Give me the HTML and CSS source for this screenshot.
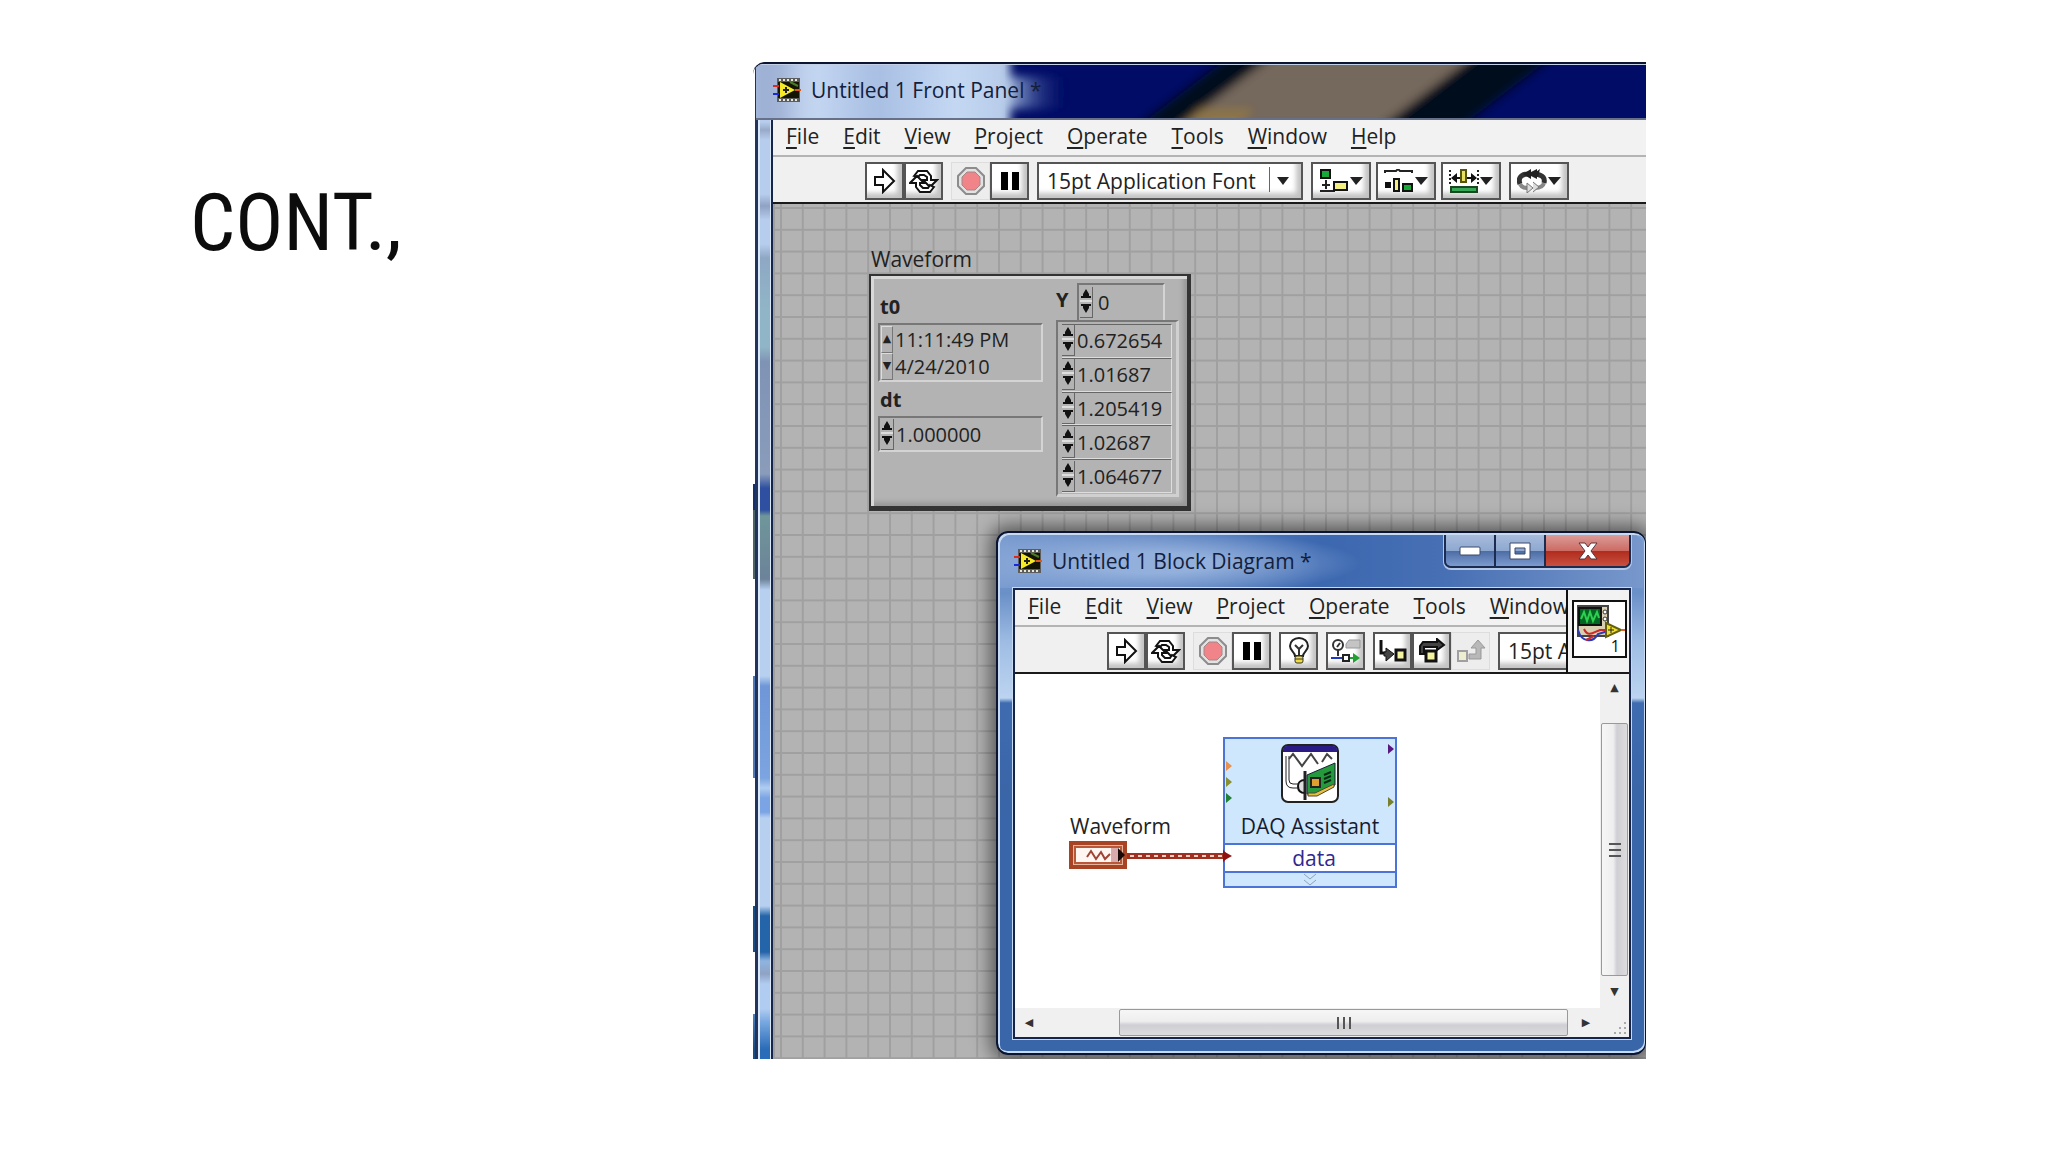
FILE: index.html
```html
<!DOCTYPE html>
<html lang="en">
<head>
<meta charset="utf-8">
<title>Cont.,</title>
<link rel="stylesheet" href="styles.css">
</head>
<body>
<svg class="symbols" aria-hidden="true">
  <symbol id="vi" viewBox="0 0 28 24">
    <rect x="4" y="0" width="23" height="24" fill="#5c5c5c"/>
    <path d="M6 2H26M6 22H26" stroke="#e8e8d8" stroke-width="2" stroke-dasharray="2 2"/>
    <rect x="5" y="4" width="21" height="16" fill="#141405"/>
    <path d="M0 8H6" stroke="#e02818" stroke-width="2"/><path d="M0 16H6" stroke="#1828d8" stroke-width="2"/>
    <path d="M7 4L22 12L7 20Z" fill="#f6ea28"/><path d="M17 4L25 8" stroke="#4c7a28" stroke-width="2"/>
    <path d="M13 9V15M10 12H16" stroke="#222" stroke-width="2"/><path d="M22 12H28" stroke="#e05818" stroke-width="2"/>
  </symbol>
  <symbol id="run" viewBox="0 0 24 26"><path d="M2 9H10V2L21 13L10 24V17H2Z" fill="#fff" stroke="#111" stroke-width="2"/></symbol>
  <symbol id="loop" viewBox="0 0 30 26">
    <path d="M5 8L9 3H18L22 8V12H28L21 19L14 12H18V9L15 7H11L9 9Z" fill="#fff" stroke="#111" stroke-width="2"/>
    <path d="M25 19L21 24H11L7 19V15H1L8 8L15 15H11V17L14 20H19L21 17Z" fill="#fff" stroke="#111" stroke-width="2"/>
  </symbol>
  <symbol id="stop" viewBox="0 0 28 28">
    <path d="M9 1H19L27 9V19L19 27H9L1 19V9Z" fill="#e2e2e2" stroke="#8c8c8c" stroke-width="2"/>
    <path d="M10 5H18L23 10V18L18 23H10L5 18V10Z" fill="#f08488" stroke="#a28888" stroke-width="1"/>
  </symbol>
  <symbol id="pause" viewBox="0 0 20 20"><path d="M1 1H8V19H1ZM12 1H19V19H12Z" fill="#000"/></symbol>
  <symbol id="align" viewBox="0 0 44 24">
    <rect x="2" y="1" width="9" height="8" fill="#18a838" stroke="#111" stroke-width="2"/>
    <path d="M7 11V20M3 16H11M1 22H16" stroke="#222" stroke-width="2"/>
    <rect x="15" y="13" width="13" height="8" fill="#f4f080" stroke="#111" stroke-width="2"/>
    <path d="M31 8H44L37 16Z" fill="#222"/>
  </symbol>
  <symbol id="distribute" viewBox="0 0 44 24">
    <path d="M1 4V2H12L14 0L16 2H28V4" fill="none" stroke="#222" stroke-width="2"/>
    <rect x="1" y="13" width="6" height="6" fill="#111"/>
    <rect x="10" y="10" width="5" height="12" fill="#f4f080" stroke="#111" stroke-width="2"/>
    <rect x="19" y="15" width="9" height="7" fill="#18a838" stroke="#111" stroke-width="2"/>
    <path d="M31 8H44L37 16Z" fill="#222"/>
  </symbol>
  <symbol id="resize" viewBox="0 0 44 24">
    <path d="M1 1V15M29 1V15" stroke="#222" stroke-width="2" stroke-dasharray="2 2"/>
    <path d="M2 9L8 4V8H12V10H8V14ZM28 9L22 4V8H18V10H22V14Z" fill="#111"/>
    <rect x="12" y="1" width="5" height="12" fill="#e8e060" stroke="#555510" stroke-width="2"/>
    <rect x="2" y="18" width="26" height="5" fill="#38a858" stroke="#174820" stroke-width="2"/>
    <path d="M31 8H44L37 16Z" fill="#222"/>
  </symbol>
  <symbol id="reorder" viewBox="0 0 44 24">
    <path d="M3 15C0 7 7 5 11 5M18 5C27 6 28 10 27 14" fill="none" stroke="#333" stroke-width="5"/>
    <path d="M6 5L14 0V3L20 0V10L14 7V10ZM16 5L23 0L21 8Z" fill="#222"/>
    <path d="M3 15C5 19 8 19 12 19M27 14C26 18 23 19 18 19" fill="none" stroke="#888" stroke-width="4"/>
    <path d="M10 14L16 19L10 24ZM16 13L22 18L16 23" fill="#ddd" stroke="#777" stroke-width="1"/>
    <path d="M31 8H44L37 16Z" fill="#222"/>
  </symbol>
  <symbol id="bulb" viewBox="0 0 22 28">
    <path d="M7 19C7 15 2 14 2 9A9 8 0 0 1 20 9C20 14 15 15 15 19Z" fill="#fff" stroke="#222" stroke-width="2"/>
    <path d="M7 8L11 12L15 8M11 12V18" fill="none" stroke="#333" stroke-width="2"/>
    <rect x="7" y="19" width="8" height="7" rx="2" fill="#f0dc40" stroke="#333" stroke-width="1"/><path d="M7 22H15" stroke="#333"/>
  </symbol>
  <symbol id="probe" viewBox="0 0 30 26">
    <circle cx="7" cy="7" r="5" fill="#fff" stroke="#333" stroke-width="2"/><path d="M6 9L9 5M7 12V18" stroke="#333" stroke-width="2"/>
    <path d="M15 10V6L18 2H29V10Z" fill="#c4c4c4" stroke="#999"/>
    <path d="M0 20H12" stroke="#2038c8" stroke-width="2"/><rect x="12" y="17" width="6" height="6" fill="#fff" stroke="#222" stroke-width="2"/>
    <path d="M19 20H25" stroke="#20a030" stroke-width="2"/><path d="M22 15L29 20L22 25Z" fill="#20a030"/>
  </symbol>
  <symbol id="into" viewBox="0 0 28 24">
    <path d="M2 1V14H8" fill="none" stroke="#111" stroke-width="3"/><path d="M7 9V13H5V17H7V22L15 15Z" fill="#444" stroke="#111"/>
    <rect x="17" y="11" width="9" height="10" fill="#f4f4a0" stroke="#111" stroke-width="3"/>
  </symbol>
  <symbol id="over" viewBox="0 0 28 26">
    <path d="M2 16V8L5 4H19V1L26 7L19 12V9H6V16Z" fill="#444" stroke="#111" stroke-width="2"/>
    <rect x="8" y="13" width="10" height="10" fill="#f4f4a0" stroke="#111" stroke-width="3"/>
  </symbol>
  <symbol id="out" viewBox="0 0 30 24">
    <rect x="2" y="12" width="9" height="10" fill="#eeeed0" stroke="#a0a0a0" stroke-width="2"/>
    <path d="M13 15V20H25V9H29L22 1L15 9H20V15Z" fill="#b8b8b8" stroke="#999"/>
  </symbol>
  <symbol id="spin" viewBox="0 0 12 28">
    <path d="M6 1L9 6V8H11V10H1V8H3V6Z" fill="#111"/><path d="M0 13H12" stroke="#ddd" stroke-width="2"/>
    <path d="M1 16H11V18H9V20L6 25L3 20V18H1Z" fill="#111"/>
  </symbol>
</svg>

<main class="slide">
  <h1 class="slide-title">CONT.,</h1>
  <section class="shot" aria-label="LabVIEW">
    <div class="front">
      <div class="front-edge"></div>
      <div class="front-main">
        <header class="front-title">
          <svg class="glass" viewBox="0 0 893 58" preserveAspectRatio="xMinYMid slice" aria-hidden="true">
            <defs>
              <filter id="soft" x="-5%" y="-20%" width="110%" height="140%"><feGaussianBlur stdDeviation="5"/></filter>
              <linearGradient id="pale"><stop offset="0" stop-color="#a9bddf"/><stop offset=".1" stop-color="#98abd0"/><stop offset=".25" stop-color="#c6d8f2"/><stop offset=".5" stop-color="#a8bfe3"/><stop offset=".8" stop-color="#c4d8f3"/><stop offset="1" stop-color="#b6cbe8"/></linearGradient>
              <linearGradient id="halo"><stop offset="0" stop-color="#a4b8dc"/><stop offset=".3" stop-color="#5468a8"/><stop offset="1" stop-color="#000c66" stop-opacity="0"/></linearGradient>
            </defs>
            <rect width="893" height="58" fill="#000c66"/>
            <g filter="url(#soft)">
              <path d="M375 70L480 -10H805L700 70Z" fill="#00081f"/>
              <path d="M416 70L523 -10H725L620 70Z" fill="#75685c"/>
              <path d="M420 70L446 46L500 46L480 70Z" fill="#8c7548"/>
              <rect x="250" y="14" width="65" height="32" fill="url(#halo)"/>
              <rect x="-20" y="-20" width="275" height="100" fill="url(#pale)"/>
            </g>
            <rect width="250" height="58" fill="url(#pale)" opacity=".4"/>
          </svg>
          <svg class="vi"><use href="#vi"/></svg>
          <span class="caption">Untitled 1 Front Panel *</span>
        </header>
        <nav class="menu">
          <button><u>F</u>ile</button><button><u>E</u>dit</button><button><u>V</u>iew</button><button><u>P</u>roject</button><button><u>O</u>perate</button><button><u>T</u>ools</button><button><u>W</u>indow</button><button><u>H</u>elp</button>
        </nav>
        <div class="toolbar">
          <div class="group"><button class="tool" aria-label="Run"><svg width="24" height="26"><use href="#run"/></svg></button><button class="tool" aria-label="Run continuously"><svg width="30" height="26"><use href="#loop"/></svg></button></div>
          <div class="group"><button class="tool off" aria-label="Abort"><svg width="28" height="28"><use href="#stop"/></svg></button><button class="tool" aria-label="Pause"><svg width="20" height="20"><use href="#pause"/></svg></button></div>
          <div class="font-pick"><select aria-label="Text settings"><option>15pt Application Font</option></select></div>
          <div class="group wide"><button class="tool" aria-label="Align objects"><svg width="44" height="24"><use href="#align"/></svg></button><button class="tool" aria-label="Distribute objects"><svg width="44" height="24"><use href="#distribute"/></svg></button><button class="tool" aria-label="Resize objects"><svg width="44" height="24"><use href="#resize"/></svg></button></div>
          <div class="group wide"><button class="tool" aria-label="Reorder"><svg width="44" height="24"><use href="#reorder"/></svg></button></div>
        </div>
        <div class="panel">
          <svg class="grid" aria-hidden="true">
            <defs><pattern id="cell" x="5" y="3" width="21.8" height="21.8" patternUnits="userSpaceOnUse"><path d="M0 1H21.8M1 0V21.8" stroke="#a0a0a0" stroke-width="2"/></pattern></defs>
            <rect width="100%" height="100%" fill="url(#cell)"/>
          </svg>
          <div class="waveform">
            <p class="wave-label">Waveform</p>
            <div class="cluster">
              <div class="times">
                <label for="t0">t0</label>
                <div class="field tall">
                  <span class="split"><button aria-label="Increase t0">▲</button><button aria-label="Decrease t0">▼</button></span>
                  <textarea id="t0" rows="2">11:11:49 PM
4/24/2010</textarea>
                </div>
                <label for="dt">dt</label>
                <div class="field"><button class="spin" aria-label="Step dt"><svg width="12" height="28"><use href="#spin"/></svg></button><input id="dt" value="1.000000"></div>
              </div>
              <div class="array">
                <div class="index"><label for="y">Y</label>
                  <div class="field"><button class="spin" aria-label="Step index"><svg width="12" height="28"><use href="#spin"/></svg></button><input id="y" value="0"></div>
                </div>
                <div class="rows">
                  <div class="row"><button class="spin" aria-label="Step Y 0"><svg width="12" height="28"><use href="#spin"/></svg></button><input aria-label="Y 0" value="0.672654"></div>
                  <div class="row"><button class="spin" aria-label="Step Y 1"><svg width="12" height="28"><use href="#spin"/></svg></button><input aria-label="Y 1" value="1.01687"></div>
                  <div class="row"><button class="spin" aria-label="Step Y 2"><svg width="12" height="28"><use href="#spin"/></svg></button><input aria-label="Y 2" value="1.205419"></div>
                  <div class="row"><button class="spin" aria-label="Step Y 3"><svg width="12" height="28"><use href="#spin"/></svg></button><input aria-label="Y 3" value="1.02687"></div>
                  <div class="row"><button class="spin" aria-label="Step Y 4"><svg width="12" height="28"><use href="#spin"/></svg></button><input aria-label="Y 4" value="1.064677"></div>
                </div>
              </div>
            </div>
          </div>
        </div>
      </div>
    </div>

    <div class="block">
      <header class="block-title">
        <svg class="vi"><use href="#vi"/></svg>
        <span class="caption">Untitled 1 Block Diagram *</span>
        <div class="controls">
          <button aria-label="Minimize"><svg width="22" height="10"><rect x="1" y="1" width="20" height="8" rx="1" fill="#fff" stroke="#3a4a68" stroke-width="1"/></svg></button>
          <button aria-label="Maximize"><svg width="22" height="18"><path fill-rule="evenodd" d="M1 1H21V17H1ZM6 6V12H16V6Z" fill="#fff" stroke="#3a4a68"/></svg></button>
          <button class="close" aria-label="Close"><svg width="20" height="18"><path d="M1 1H7L10 5L13 1H19L13 9L19 17H13L10 13L7 17H1L7 9Z" fill="#fff" stroke="#5a3038"/></svg></button>
        </div>
      </header>
      <div class="block-body">
        <div class="bars">
          <div class="bars-main">
            <nav class="menu">
              <button><u>F</u>ile</button><button><u>E</u>dit</button><button><u>V</u>iew</button><button><u>P</u>roject</button><button><u>O</u>perate</button><button><u>T</u>ools</button><button><u>W</u>indow</button>
            </nav>
            <div class="toolbar">
              <div class="group"><button class="tool" aria-label="Run"><svg width="24" height="26"><use href="#run"/></svg></button><button class="tool" aria-label="Run continuously"><svg width="30" height="26"><use href="#loop"/></svg></button></div>
              <div class="group"><button class="tool off" aria-label="Abort"><svg width="28" height="28"><use href="#stop"/></svg></button><button class="tool" aria-label="Pause"><svg width="20" height="20"><use href="#pause"/></svg></button></div>
              <button class="tool" aria-label="Highlight execution"><svg width="22" height="28"><use href="#bulb"/></svg></button>
              <button class="tool" aria-label="Retain wire values"><svg width="30" height="26"><use href="#probe"/></svg></button>
              <div class="group"><button class="tool" aria-label="Step into"><svg width="28" height="24"><use href="#into"/></svg></button><button class="tool" aria-label="Step over"><svg width="28" height="26"><use href="#over"/></svg></button><button class="tool off" aria-label="Step out"><svg width="30" height="24"><use href="#out"/></svg></button></div>
              <div class="font-pick"><select aria-label="Text settings"><option>15pt Application Font</option></select></div>
            </div>
          </div>
          <div class="vi-pane">
            <div class="vi-big">
              <svg width="51" height="50" viewBox="0 0 51 50" aria-hidden="true">
                <path d="M4 4H34V34H4Z" fill="#d8d0b0" stroke="#444" stroke-width="2"/><rect x="5" y="6" width="22" height="17" fill="#062" stroke="#111" stroke-width="2"/>
                <path d="M7 17L10 10L13 19L16 10L19 19L23 10L25 16" fill="none" stroke="#2fd050" stroke-width="2"/>
                <circle cx="31" cy="10" r="2" fill="#fff" stroke="#333"/><circle cx="31" cy="17" r="2" fill="#fff" stroke="#333"/>
                <path d="M4 28C8 42 20 40 24 32L34 29" fill="none" stroke="#2c3ab8" stroke-width="2"/><path d="M10 27C14 36 20 30 26 28H34M12 38L20 34" fill="none" stroke="#d02828" stroke-width="2"/>
                <path d="M32 21L47 28L32 35Z" fill="#f0e030" stroke="#66600c" stroke-width="2"/><path d="M47 28H51" stroke="#e06020" stroke-width="2"/><path d="M37 25V31M34 28H40" stroke="#222"/>
              </svg>
              <span class="vi-no">1</span>
            </div>
          </div>
        </div>
        <div class="work">
          <div class="canvas">
            <span class="term-label">Waveform</span>
            <svg class="term" width="58" height="28" aria-hidden="true">
              <rect x="2" y="2" width="54" height="24" fill="#e8b49c" stroke="#a84424" stroke-width="4"/>
              <rect x="6" y="6" width="46" height="16" fill="#fff6f2" stroke="#b85838" stroke-width="2"/>
              <path d="M18 16L22 10L27 18L32 11L36 18L41 13" fill="none" stroke="#a04434" stroke-width="2"/><rect x="42" y="7" width="7" height="14" fill="#d8aaac"/>
              <path d="M49 7L56 14L49 21Z" fill="#180808"/>
            </svg>
            <svg class="wire" width="105" height="10" aria-hidden="true">
              <path d="M0 5H98" stroke="#a03020" stroke-width="6"/><path d="M3 5H98" stroke="#f0d0c4" stroke-width="2" stroke-dasharray="4 4"/>
            </svg>
            <div class="daq">
              <div class="daq-head">
                <svg width="58" height="59" viewBox="0 0 58 59" aria-hidden="true">
                  <rect x="1" y="1" width="56" height="57" rx="6" fill="#fff" stroke="#222" stroke-width="2"/><path d="M2 6Q2 2 6 2H52Q56 2 56 6V8H2Z" fill="#2a1c84"/>
                  <path d="M5 12V37Q5 44 12 44H18M8 12V36Q8 40 12 40H18" fill="none" stroke="#222" stroke-width="1"/>
                  <path d="M8 15L12 10L21 22L30 10L37 20M41 18L46 10L51 15" fill="none" stroke="#444" stroke-width="2"/>
                  <path d="M24 36C19 36 17 39 17 42C17 46 19 49 24 49Z" fill="#ddd" stroke="#111" stroke-width="2"/><path d="M24 27V56" stroke="#222" stroke-width="3"/>
                  <path d="M26 31L54 19V41L34 50H26Z" fill="#249a3c" stroke="#123"/><path d="M27 49H34L53 40V43L36 52H27Z" fill="#e4c040" stroke="#543"/>
                  <rect x="30" y="34" width="9" height="9" fill="#e0a030" stroke="#222" stroke-width="2"/><path d="M43 31L50 28M43 35L50 32M43 39L50 36" stroke="#0a2814" stroke-width="2"/>
                </svg>
                <span>DAQ Assistant</span>
              </div>
              <div class="daq-data">data</div>
              <div class="daq-foot"><svg width="14" height="14"><path d="M1 1L7 6L13 1M1 7L7 12L13 7" fill="none" stroke="#8ca4b8" stroke-width="1"/></svg></div>
              <svg class="ports" viewBox="0 0 174 151" aria-hidden="true">
                <path d="M3 24L9 29L3 34Z" fill="#e8904c"/><path d="M3 40L9 45L3 50Z" fill="#889030"/><path d="M3 56L9 61L3 66Z" fill="#208038"/>
                <path d="M165 7L171 12L165 17Z" fill="#581880"/><path d="M165 60L171 65L165 70Z" fill="#788030"/>
                <path d="M0 112L5 119L0 126Z" fill="#c01818"/><path d="M0 114L9 119L0 124Z" fill="#901010"/>
              </svg>
            </div>
          </div>
          <div class="vscroll"><span class="arrow">▲</span><div class="thumb"><svg width="12" height="14"><path d="M0 1H12M0 7H12M0 13H12" stroke="#555" stroke-width="2"/></svg></div><span class="arrow">▼</span></div>
          <div class="hscroll"><span class="arrow">◀</span><div class="thumb"><svg width="14" height="12"><path d="M1 0V12M7 0V12M13 0V12" stroke="#555" stroke-width="2"/></svg></div><span class="arrow">▶</span></div>
          <div class="grip"><svg width="14" height="14"><path d="M12 1V14M7 6V14M2 11V14" stroke="#aaa" stroke-width="2" stroke-dasharray="2 3"/></svg></div>
        </div>
      </div>
    </div>
  </section>
</main>
</body>
</html>
```
FILE: styles.css
```css
* { box-sizing: border-box; }
body { margin: 0; background: #fff; font-family: "Open Sans", "Noto Sans", sans-serif; font-size: 20px; color: #222; }
button, input, textarea, select { font: inherit; color: inherit; margin: 0; padding: 0; border: 0; background: none; border-radius: 0; }
svg { display: block; flex: none; }
.symbols { position: absolute; width: 0; height: 0; }

.slide { display: grid; grid-template-columns: 753fr 893fr 402fr; min-height: 100vh; padding: 62px 0 93px; }
.slide-title { margin: 0; padding: 121px 0 0 190px; font-family: "Tw Cen MT Condensed", "Roboto Condensed", "Liberation Sans Narrow", sans-serif; font-weight: 400; font-size: 80px; line-height: 1; color: #0c0c0c; }

.shot { position: relative; overflow: hidden; display: grid; }

.front { display: grid; grid-template-columns: 20px 1fr; border-top: 2px solid #0b1430; border-top-left-radius: 12px; overflow: hidden;
  background: linear-gradient(#fff 420px, #16306c 420px, #16306c 446px, #4c6464 446px, #4c6464 515px, #fff 515px, #fff 612px, #5078b8 612px, #5078b8 714px, #fff 714px, #fff 842px, #184c84 842px, #184c84 888px, #fff 888px, #fff 950px, #4c80c0 950px, #184c84 985px); }
.front-edge { margin-left: 2px; border: solid; border-width: 0 2px 0 3px; border-color: transparent #16264a transparent #22345c;
  background: linear-gradient(#b0c4e8 0, #b7cdee 58px, #98aac8 66px, #b7cdee 76px, #b7cdee 130px, #8fa2c4 142px, #b7cdee 156px, #b7cdee 180px, #8ea8c4 194px, #90b5c6 245px, #90b5c6 283px, #7f93b5 298px, #8a9cba 410px, #2f50a0 424px, #2f50a0 446px, #6f9699 452px, #6c8399 515px, #b7d0f0 526px, #b7d0f0 612px, #6f97d8 622px, #7ba4e0 714px, #b0ccf0 724px, #7ba4e4 734px, #7ba4e4 748px, #b7d0f0 754px, #b7d0f0 842px, #2464a8 852px, #2464a8 888px, #8fb4e0 897px, #8fa3c4 910px, #b0ccf0 920px, #b0ccf0 945px, #78a8e0 958px, #2b6cb8 985px);
  box-shadow: inset 2px 0 #dbe8fa, inset -1px 0 #dbe8fa; }
.front-main { display: flex; flex-direction: column; min-width: 0; }
.front-title { position: relative; height: 56px; margin-left: -17px; padding: 0 0 2px 17px; display: flex; align-items: center; border-bottom: 2px solid #667089; box-shadow: inset 0 2px #c4d0e6; }
.glass { position: absolute; left: 0; top: 1px; width: 100%; height: 53px; }
.vi { position: relative; width: 28px; height: 24px; }
.caption { position: relative; margin-left: 10px; font-size: 21px; color: #12203c; line-height: 28px; white-space: nowrap; }

.menu { display: flex; gap: 24px; height: 37px; padding: 0 0 3px 13px; align-items: center; font-size: 21px; background: #f2f2f2; border-bottom: 2px solid #b4b4b4; }
.menu button { line-height: 28px; white-space: nowrap; }
.menu u { text-decoration-thickness: 2px; text-underline-offset: 3px; }
.toolbar { display: flex; gap: 8px; height: 47px; padding: 2px 0 0 92px; align-items: center; background: #f0f0f0; border-bottom: 2px solid #1a1a1a; }
.group { display: flex; flex: none; }
.wide { gap: 5px; }
.tool { flex: none; width: 39px; height: 38px; display: flex; align-items: center; justify-content: center; background: #fff; border: 2px solid #555; box-shadow: inset -5px -5px 5px #c4c4c4; }
.wide .tool { width: 60px; }
.tool.off { background: #ededed; border: 1px solid #ddd; box-shadow: none; }
.font-pick { position: relative; flex: none; width: 266px; height: 38px; background: #fff; border: 2px solid #555; box-shadow: inset -5px -5px 5px #c4c4c4; }
.font-pick select { appearance: none; width: 100%; height: 100%; padding-left: 8px; font-size: 21px; }
.font-pick::before { content: ""; position: absolute; right: 31px; top: 3px; bottom: 6px; width: 1px; background: #666; }
.font-pick::after { content: ""; position: absolute; right: 12px; top: 13px; border: solid transparent; border-width: 8px 6px 0; border-top-color: #222; }

.panel { position: relative; flex: 1; background: #b3b3b3; border-left: 2px solid #a0a0a0; padding: 43px 0 0 94px; }
.grid { position: absolute; inset: 0; width: 100%; height: 100%; }
.waveform { position: relative; width: 322px; }
.wave-label { margin: 0; height: 27px; line-height: 24px; padding-left: 2px; font-size: 21px; }
.cluster { display: flex; gap: 13px; height: 237px; padding: 7px 8px 9px 7px; background: #b3b3b3; border: 2px solid #333; border-right-width: 4px; border-bottom-width: 5px; box-shadow: inset 3px 3px #d8d8d8, inset -4px -4px 4px #999; }
.times { width: 165px; display: flex; flex-direction: column; padding-top: 6px; }
.times label { font-weight: 700; height: 34px; line-height: 36px; padding-left: 2px; }
.field { display: flex; align-items: center; gap: 2px; height: 36px; border: 2px solid #777; border-right-color: #d4d4d4; border-bottom-color: #d4d4d4; padding-left: 1px; }
.field.tall { height: 59px; }
.field input, .row input { flex: 1; min-width: 0; width: 0; height: 30px; }
.split { display: grid; grid-template-rows: 1fr 1fr; height: 54px; width: 12px; }
.split button { font: 11px/24px "DejaVu Sans", sans-serif; border: 1px solid #777; border-top-color: #ddd; border-left-color: #ddd; overflow: hidden; }
.field textarea { flex: 1; min-width: 0; height: 54px; line-height: 27px; resize: none; overflow: hidden; white-space: pre; }
.spin { width: 13px; height: 31px; border-right: 1px solid #666; border-bottom: 1px solid #666; }
.array { flex: 1; display: flex; flex-direction: column; }
.index { display: flex; gap: 7px; height: 37px; }
.index label { font-weight: 700; line-height: 34px; width: 14px; }
.index .field { width: 88px; height: 37px; border-bottom: 0; }
.index .field input { padding-left: 3px; }
.rows { display: grid; grid-template-rows: repeat(5, 1fr); height: 181px; padding: 2px 4px 1px; border-left: 2px solid #777; border-top: 2px solid #777; border-right: 3px solid #d0d0d0; border-bottom: 3px solid #d0d0d0; }
.row { display: flex; align-items: center; gap: 2px; border-bottom: 1px solid #ddd; border-right: 1px solid #ddd; border-top: 1px solid #666; }

.block { position: absolute; left: 243px; top: 469px; right: 0; bottom: 4px; display: flex; flex-direction: column; padding: 0 14px 14px 15px; border: 2px solid #0b1430; border-radius: 12px; border-right-width: 1px;
  background: linear-gradient(#7ea3d4 0, #6a90c8 60px, #9fbde4 110px, #bcd4f0 165px, #3f6cb0 170px, #3a66a8 260px, #3866a8); box-shadow: inset 2px 2px #c8daf2, inset -1px -2px #c8daf2, 0 0 18px 6px rgba(0,0,0,.5); }
.block-title { display: flex; align-items: center; height: 53px; margin: 2px -12px 0 -13px; padding: 0 12px 1px 14px; border-radius: 10px 10px 0 0;
  background: radial-gradient(ellipse 210px 34px at 150px 28px, #93b0dc 30%, transparent), linear-gradient(90deg, #7b9cd0, #3c68b0 50%, #4870b4 70%, #7898cc); }
.controls { display: flex; align-self: flex-start; margin-left: auto; height: 33px; border: 2px solid #1b2c50; border-top: 0; border-radius: 0 0 7px 7px; overflow: hidden; box-shadow: 0 1px 0 1px #b4c8e8; }
.controls button { width: 50px; display: grid; place-items: center; border-right: 2px solid #1b2c50; background: linear-gradient(#a8bcdc 0, #8ea8d0 50%, #4c6ca4 52%, #7c9cd0); }
.controls .close { width: 83px; border: 0; background: linear-gradient(#dc9c98 0, #cc6c64 50%, #b02c1c 52%, #c85040); }
.block-body { flex: 1; display: flex; flex-direction: column; border: 2px solid #14244a; outline: 1px solid #c8daf2; background: #fff; min-height: 0; }
.bars { display: grid; grid-template-columns: 1fr 63px; }
.bars-main { overflow: hidden; }
.vi-pane { border-left: 2px solid #111; border-bottom: 2px solid #1a1a1a; background: #f2f2f2; padding: 10px 2px 0 4px; }
.vi-big { position: relative; height: 58px; background: #fff; border: 2px solid #111; }
.vi-no { position: absolute; right: 5px; bottom: 0; font-size: 16px; line-height: 20px; color: #111; }
.work { flex: 1; display: grid; grid-template-columns: 1fr 29px; grid-template-rows: 1fr 29px; min-height: 0; }
.canvas { position: relative; background: #fff; font-size: 21px; }
.term-label { position: absolute; left: 55px; top: 138px; line-height: 28px; }
.term { position: absolute; left: 54px; top: 167px; }
.wire { position: absolute; left: 112px; top: 177px; }
.daq { position: absolute; left: 208px; top: 63px; width: 174px; height: 151px; display: flex; flex-direction: column; border: 2px solid #4c74d8; background: #cfe7fd; color: #161c30; }
.daq-head { height: 104px; display: flex; flex-direction: column; align-items: center; padding-top: 5px; }
.daq-head span { line-height: 46px; white-space: nowrap; }
.daq-data { height: 30px; line-height: 26px; text-align: center; padding-left: 8px; color: #302890; background: #fff; border: solid #4c74d8; border-width: 2px 0; }
.daq-foot { display: flex; justify-content: center; }
.ports { position: absolute; left: -2px; top: -2px; width: 174px; height: 151px; }
.vscroll, .hscroll { display: flex; align-items: center; background: #f0f0f0; }
.vscroll { flex-direction: column; padding-bottom: 2px; }
.arrow { font: 11px/28px "DejaVu Sans", sans-serif; color: #333; width: 28px; text-align: center; }
.thumb { display: grid; place-items: center; border: 1px solid #999; border-radius: 2px; }
.vscroll .thumb { width: 27px; flex: 1; margin: 21px 0 2px; background: linear-gradient(90deg, #f6f6f6, #eee 45%, #cfcfd4 60%, #dcdcde); }
.hscroll .thumb { height: 27px; flex: 1; margin: 0 4px 0 76px; background: linear-gradient(#f6f6f6, #eee 45%, #cfcfd4 60%, #dcdcde); }
.grip { display: grid; place-items: end; background: #f0f0f0; padding: 2px; }
```
